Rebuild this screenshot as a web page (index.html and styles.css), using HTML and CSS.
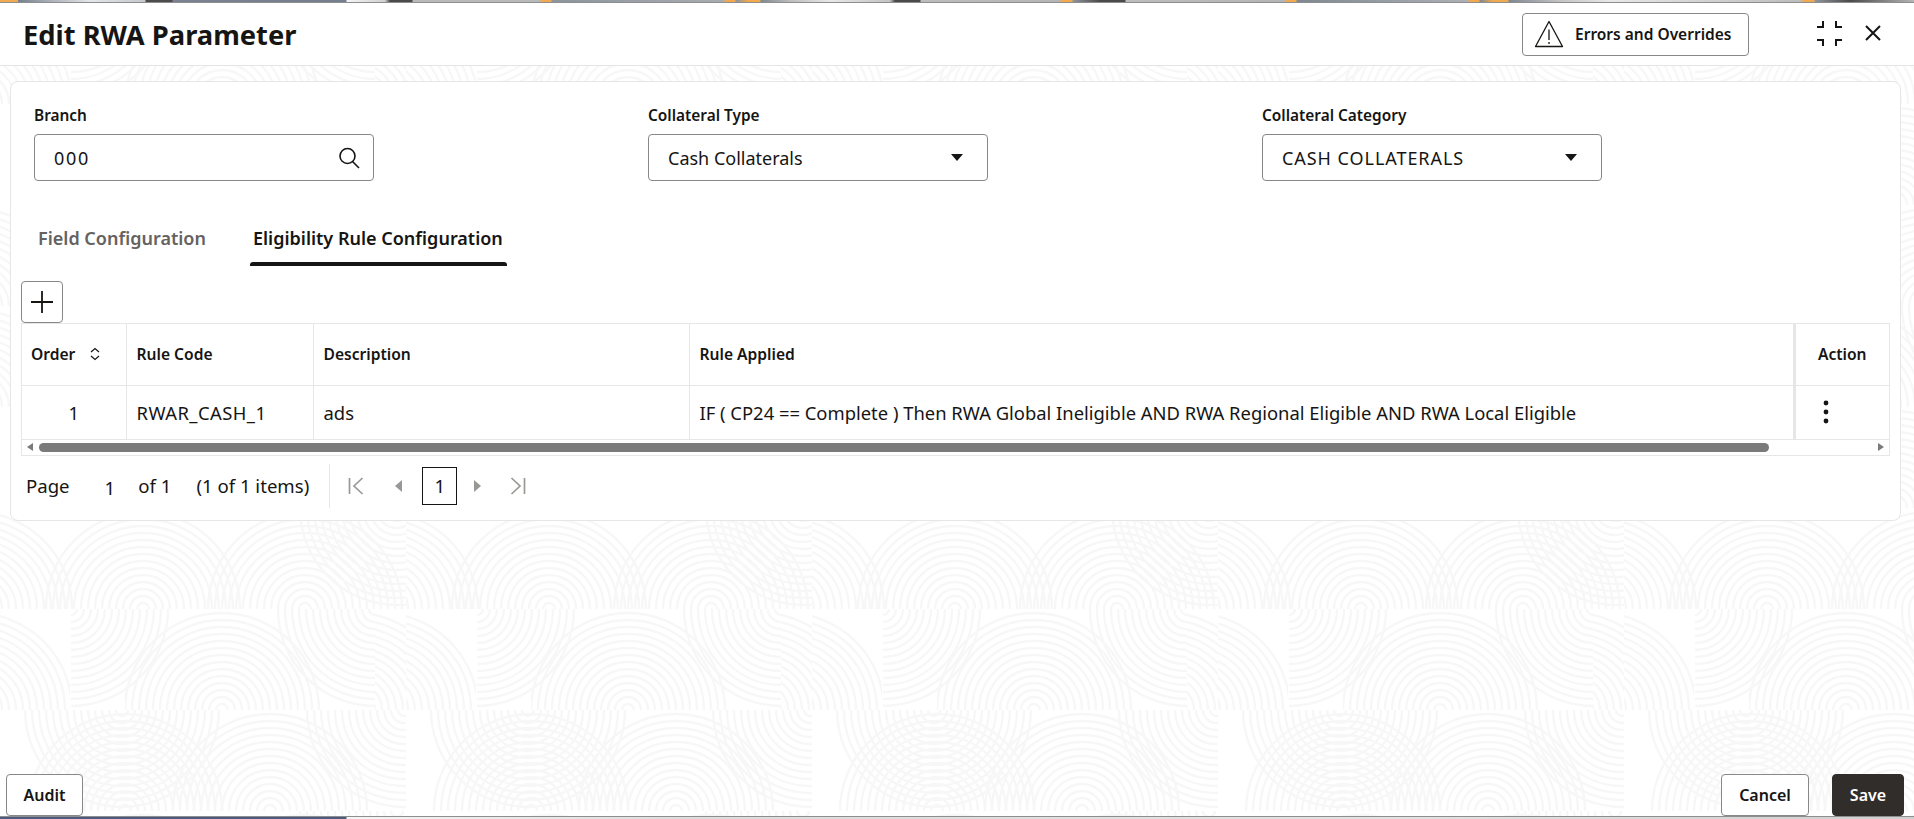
FILE: index.html
```html
<!DOCTYPE html>
<html lang="en">
<head>
    <meta charset="UTF-8">
    <title>Edit RWA Parameter</title>
    <link rel="stylesheet" href="styles.css">
</head>
<body>
    <!-- fingerprint backdrop behind the dialog -->
    <svg class="backdrop" width="1914" height="819" aria-hidden="true">
        <defs>
            <g id="rings" fill="none" stroke="#f7f7f7" stroke-width="2.4">
                <circle r="6"/><circle r="13"/><circle r="20"/><circle r="27"/><circle r="34"/>
                <circle r="41"/><circle r="48"/><circle r="55"/><circle r="62"/><circle r="69"/>
                <circle r="76"/><circle r="83"/><circle r="90"/><circle r="97"/>
            </g>
            <pattern id="ridges" x="0" y="508" width="406" height="303" patternUnits="userSpaceOnUse">
                <svg x="0" y="0" width="406" height="101">
                    <use href="#rings" x="143" y="101"/>
                    <use href="#rings" x="-25" y="101"/>
                    <use href="#rings" x="305" y="101"/>
                    <use href="#rings" x="397" y="0"/>
                </svg>
                <svg x="0" y="101" width="70" height="101"><use href="#rings" x="-25" y="101"/></svg>
                <svg x="71" y="101" width="105" height="101"><use href="#rings" x="0" y="0"/></svg>
                <svg x="125" y="101" width="200" height="101"><use href="#rings" x="97" y="101"/></svg>
                <svg x="275" y="101" width="100" height="101"><use href="#rings" x="100" y="0"/></svg>
                <svg x="375" y="101" width="31" height="101"><use href="#rings" x="-20" y="101"/></svg>
                <svg x="0" y="202" width="406" height="101">
                    <use href="#rings" x="122" y="0"/>
                    <use href="#rings" x="125" y="101"/>
                    <use href="#rings" x="270" y="101"/>
                    <use href="#rings" x="404" y="0"/>
                </svg>
            </pattern>
        </defs>
        <rect width="1914" height="819" fill="#fff"/>
        <rect y="66" width="1914" height="753" fill="url(#ridges)"/>
    </svg>

    <div class="page">
        <div class="strip-top"></div>

        <header class="dialog-header">
            <h1 class="title">Edit RWA Parameter</h1>
            <button class="btn btn-errors">
                <svg width="30" height="30" viewBox="0 0 30 30" fill="none" stroke="#161513" stroke-width="1.3">
                    <path d="M15 2.5 L28.5 27.5 H1.5 Z" stroke-linejoin="round"/>
                    <path d="M15 10.5 V21 M15 23 V25"/>
                </svg>
                Errors and Overrides
            </button>
            <svg class="icon-collapse" width="27" height="27" viewBox="0 0 27 27" fill="none" stroke="#161513" stroke-width="2">
                <path d="M1 7 H7 V1 M20 1 V7 H26 M1 20 H7 V26 M20 26 V20 H26"/>
            </svg>
            <svg class="icon-close" width="18" height="18" viewBox="0 0 18 18" fill="none" stroke="#161513" stroke-width="2">
                <path d="M2 2 L16 16 M16 2 L2 16"/>
            </svg>
        </header>

        <main class="content">
            <section class="card">
                <div class="fields">
                    <div class="field">
                        <label>Branch</label>
                        <div class="input">
                            <span class="value-code">000</span>
                            <svg width="24" height="24" viewBox="0 0 24 24" fill="none" stroke="#161513" stroke-width="1.6">
                                <circle cx="10.5" cy="10" r="7.5"/>
                                <path d="M15.5 15.5 L22 22"/>
                            </svg>
                        </div>
                    </div>
                    <div class="field">
                        <label>Collateral Type</label>
                        <div class="input input-select">
                            <span>Cash Collaterals</span>
                            <i class="caret"></i>
                        </div>
                    </div>
                    <div class="field">
                        <label>Collateral Category</label>
                        <div class="input input-select">
                            <span class="value-upper">CASH COLLATERALS</span>
                            <i class="caret"></i>
                        </div>
                    </div>
                </div>

                <div class="tabs">
                    <div class="tab">Field Configuration</div>
                    <div class="tab active">Eligibility Rule Configuration</div>
                </div>

                <button class="btn btn-add">
                    <svg width="26" height="26" viewBox="0 0 26 26" fill="none" stroke="#161513" stroke-width="1.8">
                        <path d="M13 2 V24 M2 13 H24"/>
                    </svg>
                </button>

                <div class="table-wrap">
                    <table class="grid">
                        <colgroup>
                            <col class="col-order">
                            <col class="col-code">
                            <col class="col-desc">
                            <col>
                            <col class="col-action">
                        </colgroup>
                        <thead>
                            <tr>
                                <th>
                                    <span class="order-head">Order
                                        <svg width="12" height="14" viewBox="0 0 12 14" fill="none" stroke="#161513" stroke-width="1.2">
                                            <path d="M2 5 L6 1.5 L10 5 M2 9 L6 12.5 L10 9"/>
                                        </svg>
                                    </span>
                                </th>
                                <th>Rule Code</th>
                                <th>Description</th>
                                <th>Rule Applied</th>
                                <th class="cell-action">Action</th>
                            </tr>
                        </thead>
                        <tbody>
                            <tr>
                                <td class="cell-order">1</td>
                                <td class="cell-code">RWAR_CASH_1</td>
                                <td>ads</td>
                                <td>IF ( CP24 == Complete ) Then RWA Global Ineligible AND RWA Regional Eligible AND RWA Local Eligible</td>
                                <td class="cell-action">
                                    <svg class="kebab" width="6" height="24" viewBox="0 0 6 24" fill="#161513">
                                        <circle cx="3" cy="3" r="2.4"/><circle cx="3" cy="12" r="2.4"/><circle cx="3" cy="21" r="2.4"/>
                                    </svg>
                                </td>
                            </tr>
                        </tbody>
                    </table>
                    <div class="scrollbar">
                        <i class="arrow-left"></i>
                        <div class="scroll-track"><div class="scroll-thumb"></div></div>
                        <i class="arrow-right"></i>
                    </div>
                </div>

                <div class="pager">
                    <span class="pager-page">Page</span>
                    <span class="pager-num">1</span>
                    <span class="pager-of">of 1</span>
                    <span class="pager-items">(1 of 1 items)</span>
                    <span class="pager-sep"></span>
                    <svg class="pager-first" width="16" height="18" viewBox="0 0 16 18" fill="none" stroke="#9a9895" stroke-width="1.7">
                        <path d="M1.5 1 V17 M14.5 1 L6 9 L14.5 17"/>
                    </svg>
                    <i class="pager-prev"></i>
                    <span class="pager-box">1</span>
                    <i class="pager-next"></i>
                    <svg class="pager-last" width="16" height="18" viewBox="0 0 16 18" fill="none" stroke="#9a9895" stroke-width="1.7">
                        <path d="M14.5 1 V17 M1.5 1 L10 9 L1.5 17"/>
                    </svg>
                </div>
            </section>
        </main>

        <footer class="dialog-footer">
            <button class="btn btn-audit">Audit</button>
            <button class="btn btn-cancel">Cancel</button>
            <button class="btn btn-save">Save</button>
        </footer>

        <div class="strip-bottom"></div>
    </div>
</body>
</html>
```

FILE: styles.css
```css
* {
    box-sizing: border-box;
}
html, body {
    margin: 0;
    padding: 0;
    height: 100%;
    overflow: hidden;
}
body {
    font-family: "Noto Sans", "Open Sans", Arial, sans-serif;
    color: #161513;
    background: #fff;
    position: relative;
}
.backdrop {
    position: absolute;
    top: 0;
    left: 0;
    z-index: 0;
}
.page {
    position: relative;
    z-index: 1;
    display: flex;
    flex-direction: column;
    height: 819px;
}
.strip-top {
    height: 3px;
    flex: none;
    background: linear-gradient(90deg,
        #f0a94e 0, #f0a94e 18px, #76808e 18px, #aab0b8 50px, #e4e6e8 90px, #c6c9cd 145px,
        #4c4c4c 146px, #4c4c4c 172px, #7a8290 173px, #747e8e 346px,
        #f5f5f5 347px, #d0d0d0 385px, #4a4a4a 390px, #4a4a4a 412px, #b9b9b9 413px, #b9b9b9 540px,
        #f0a94e 541px, #f0a94e 551px, #8d949c 552px, #a9adb2 724px,
        #f0a94e 725px, #f0a94e 735px, #8d949c 736px, #f0a94e 748px, #f0a94e 760px, #7f8891 761px, #bdbdbd 790px,
        #e8e8e8 830px, #c4c4c4 890px, #4a4a4a 895px, #4a4a4a 920px, #bdbdbd 921px, #b5b5b5 1060px,
        #f0a94e 1061px, #f0a94e 1072px, #8d949c 1073px, #4a4a4a 1100px, #4a4a4a 1125px, #bdbdbd 1126px, #b5b5b5 1285px,
        #f0a94e 1286px, #f0a94e 1296px, #7f8891 1297px, #adb1b6 1468px,
        #f0a94e 1469px, #f0a94e 1479px, #7f8891 1480px, #f0a94e 1492px, #f0a94e 1508px, #7f8891 1509px, #c4c4c4 1560px,
        #e8e8e8 1610px, #bdbdbd 1800px, #f0a94e 1804px, #f0a94e 1814px, #8d949c 1815px, #4a4a4a 1850px, #b5b5b5 1914px);
    border-bottom: 1px solid #8e8e8e;
}
.dialog-header {
    flex: none;
    height: 63px;
    display: flex;
    align-items: center;
    padding-left: 23px;
    background: #fff;
    border-bottom: 1px solid #e4e4e4;
}
.title {
    margin: 2px auto 0 0;
    font-size: 27.3px;
    font-weight: 700;
    line-height: 1;
}
.btn {
    font-family: inherit;
    color: #161513;
    background: #fff;
    border: 1px solid #8a8886;
    border-radius: 4px;
    font-size: 16px;
    font-weight: 600;
    cursor: pointer;
}
.btn-errors {
    width: 227px;
    height: 43px;
    display: flex;
    align-items: center;
    gap: 11px;
    padding: 0 0 0 11px;
    font-size: 15.5px;
}
.icon-collapse {
    margin: -2px 0 0 67px;
}
.icon-close {
    margin: -2px 32px 0 21px;
}
.content {
    flex: none;
    padding: 15px 13px 0 10px;
}
.card {
    background: #fff;
    border: 1px solid #e6e6e6;
    border-radius: 8px;
    height: 440px;
    padding: 0 10px;
}
.fields {
    display: flex;
    gap: 274px;
    padding: 23px 0 0 13px;
}
.field {
    width: 340px;
}
.field label {
    display: block;
    font-size: 15.4px;
    font-weight: 600;
    line-height: 20px;
    padding-top: 1px;
    margin-bottom: 8px;
}
.input {
    height: 47px;
    border: 1px solid #8a8886;
    border-radius: 4px;
    background: #fff;
    display: flex;
    align-items: center;
    justify-content: space-between;
    padding: 0 12px 0 19px;
    font-size: 18px;
}
.input-select {
    padding-right: 24px;
}
.value-code {
    letter-spacing: 1.7px;
}
.value-upper {
    letter-spacing: 0.95px;
}
.caret {
    width: 0;
    height: 0;
    border-left: 6.5px solid transparent;
    border-right: 6.5px solid transparent;
    border-top: 7px solid #161513;
}
.tabs {
    display: flex;
    gap: 40px;
    margin: 38px 0 0 14px;
}
.tab {
    position: relative;
    height: 47px;
    padding: 0 4px 0 3px;
    font-size: 18px;
    font-weight: 600;
    line-height: 39px;
    color: #65625f;
}
.tab.active {
    color: #161513;
}
.tab.active::after {
    content: "";
    position: absolute;
    left: 0;
    right: 0;
    bottom: 0;
    height: 4px;
    background: #161513;
    border-radius: 3px 3px 0 0;
}
.btn-add {
    display: flex;
    align-items: center;
    justify-content: center;
    width: 42px;
    height: 42px;
    margin-top: 15px;
    padding: 0;
}
.table-wrap {
    width: 1869px;
    border: 1px solid #e6e6e6;
}
.grid {
    width: 100%;
    table-layout: fixed;
    border-collapse: collapse;
}
.col-order {
    width: 104px;
}
.col-code {
    width: 187px;
}
.col-desc {
    width: 376px;
}
.col-action {
    width: 95px;
}
.grid th {
    height: 61px;
    text-align: left;
    font-size: 15.6px;
    font-weight: 600;
    padding: 0 10px;
    border-bottom: 1px solid #e6e6e6;
    border-left: 1px solid #e6e6e6;
}
.grid td {
    height: 54px;
    font-size: 18.4px;
    padding: 0 10px;
    border-bottom: 1px solid #e6e6e6;
    border-left: 1px solid #e6e6e6;
}
.grid th:first-child, .grid td:first-child {
    border-left: none;
    padding: 0 9px;
}
.grid .cell-action {
    border-left: 3px solid #e6e6e6;
    text-align: center;
}
.order-head {
    display: flex;
    align-items: center;
    gap: 14px;
}
.cell-order {
    text-align: center;
}
.grid .cell-code {
    letter-spacing: 0.45px;
}
.kebab {
    display: block;
    margin: 0 auto 0 17px;
}
.scrollbar {
    display: flex;
    align-items: center;
    height: 15px;
    padding: 0 5px;
}
.arrow-left {
    width: 0;
    height: 0;
    border-top: 4.5px solid transparent;
    border-bottom: 4.5px solid transparent;
    border-right: 6px solid #7a7a7a;
}
.arrow-right {
    width: 0;
    height: 0;
    border-top: 4.5px solid transparent;
    border-bottom: 4.5px solid transparent;
    border-left: 6px solid #7a7a7a;
}
.scroll-track {
    flex: 1;
    padding: 0 6px;
}
.scroll-thumb {
    width: 1730px;
    height: 9px;
    border-radius: 5px;
    background: #7a7a7a;
}
.pager {
    display: flex;
    align-items: center;
    height: 58px;
    padding: 2px 0 0 5px;
    font-size: 18.6px;
}
.pager-num {
    margin-left: 35px;
    position: relative;
    top: 2px;
}
.pager-of {
    margin-left: 23px;
}
.pager-items {
    margin-left: 25px;
}
.pager-sep {
    width: 1px;
    height: 44px;
    margin-left: 20px;
    background: #e6e6e6;
}
.pager-first {
    margin-left: 18px;
}
.pager-prev {
    margin-left: 31px;
    width: 0;
    height: 0;
    border-top: 6.5px solid transparent;
    border-bottom: 6.5px solid transparent;
    border-right: 7px solid #9a9895;
}
.pager-box {
    width: 35px;
    height: 38px;
    margin-left: 20px;
    border: 1px solid #161513;
    display: flex;
    align-items: center;
    justify-content: center;
}
.pager-next {
    margin-left: 17px;
    width: 0;
    height: 0;
    border-top: 6.5px solid transparent;
    border-bottom: 6.5px solid transparent;
    border-left: 7px solid #9a9895;
}
.pager-last {
    margin-left: 29px;
}
.dialog-footer {
    margin-top: auto;
    display: flex;
    align-items: center;
    padding: 0 10px 0 6px;
    flex: none;
}
.dialog-footer .btn {
    height: 42px;
}
.btn-audit {
    width: 77px;
    margin-right: auto;
}
.btn-cancel {
    width: 88px;
}
.btn-save {
    width: 72px;
    margin-left: 23px;
    color: #fff;
    background: #312d2a;
    border-color: #312d2a;
}
.strip-bottom {
    flex: none;
    height: 3px;
    border-top: 1px solid #8e8e8e;
    background: linear-gradient(90deg, #4d5a7c 0, #4d5a7c 346px, #f5f5f5 347px, #dcdcdc 700px, #e2e2e2 1400px, #cfcfcf 1914px);
}
```
